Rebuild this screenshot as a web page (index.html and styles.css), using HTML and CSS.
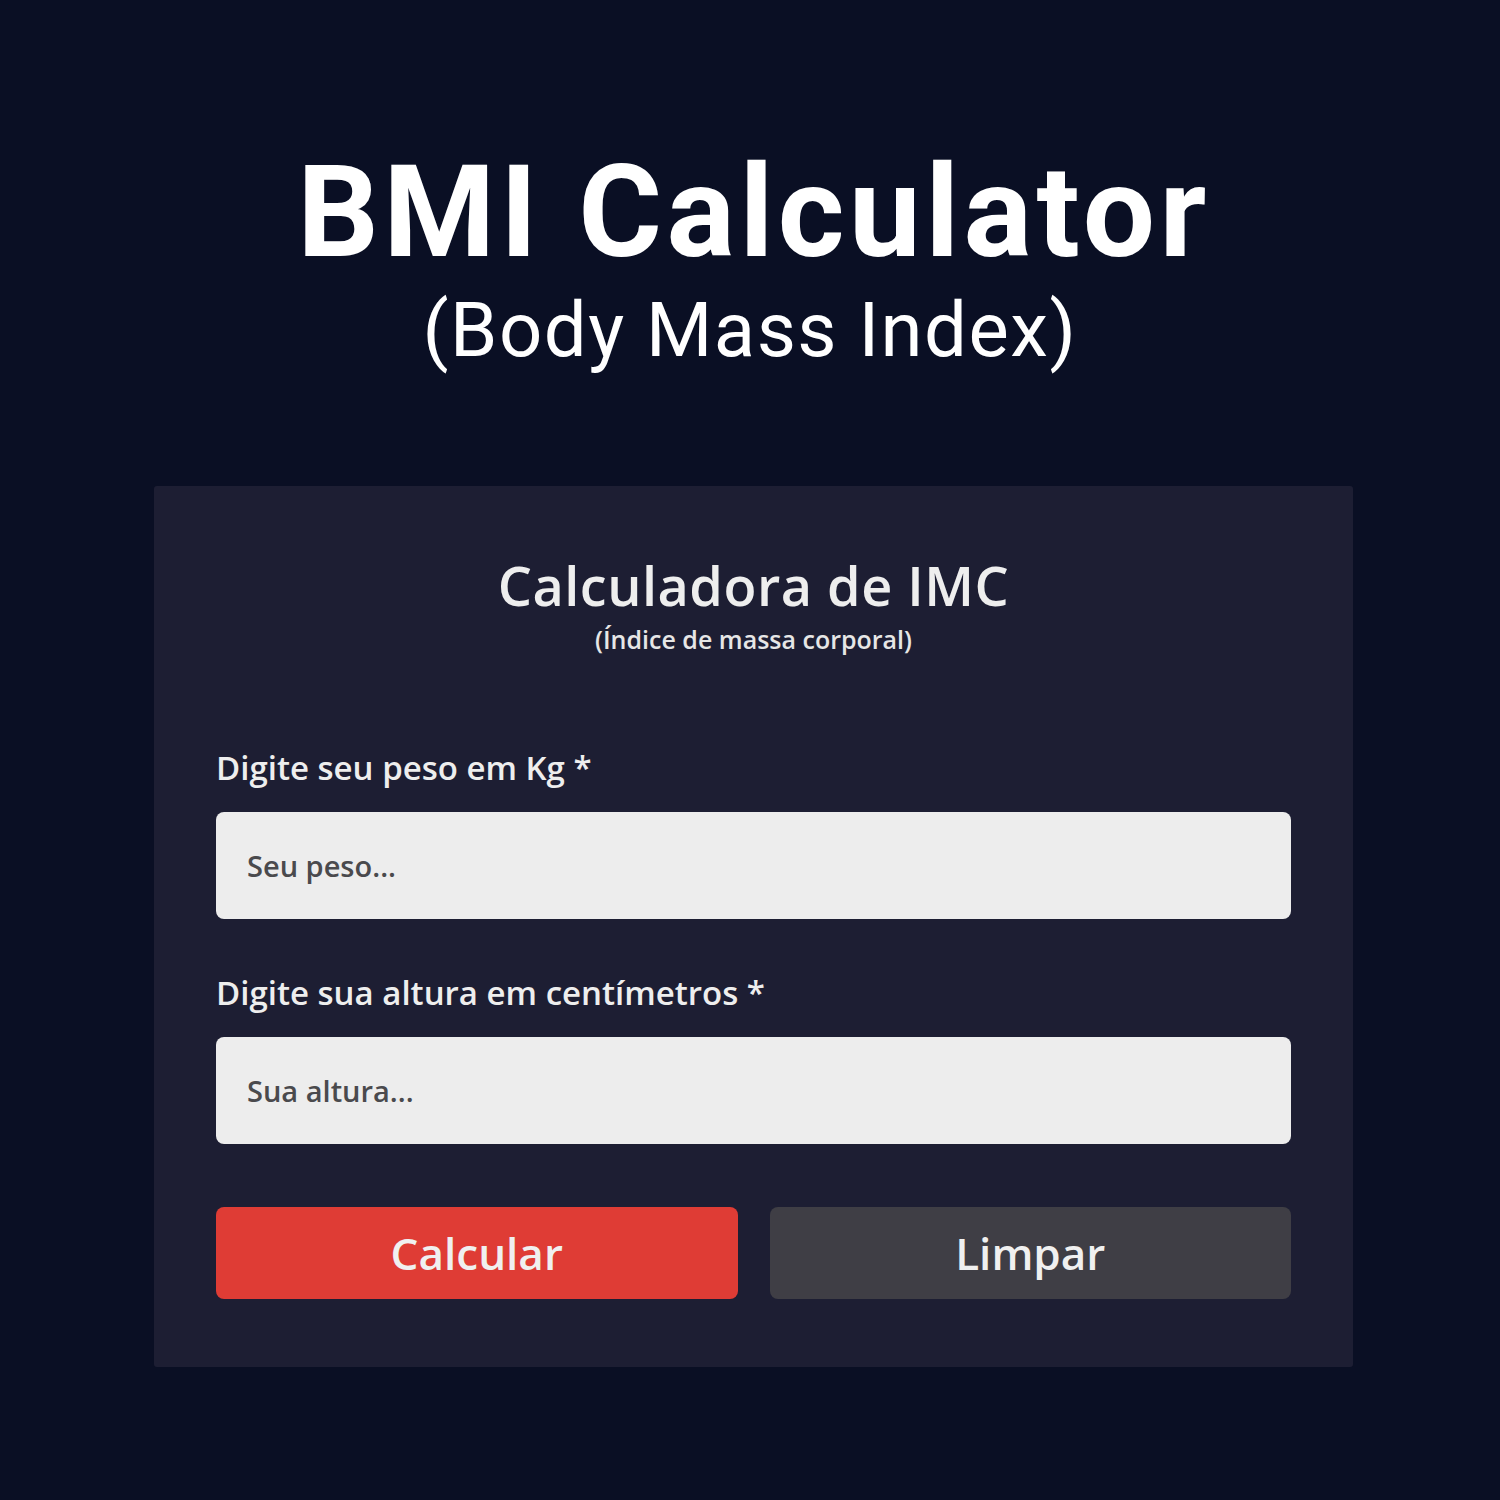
FILE: index.html
```html
<!DOCTYPE html>
<html lang="pt">
<head>
<meta charset="utf-8">
<title>BMI Calculator</title>
<link rel="stylesheet" href="styles.css">
</head>
<body>
<main class="page">
  <header class="hero">
    <h1 class="hero-title">BMI Calculator</h1>
    <p class="hero-sub">(Body Mass Index)</p>
  </header>
  <section class="card">
    <div class="card-head">
      <h2 class="card-title">Calculadora de IMC</h2>
      <p class="card-sub">(Índice de massa corporal)</p>
    </div>
    <div class="field">
      <label class="label" for="peso">Digite seu peso em Kg *</label>
      <input class="input" id="peso" type="text" placeholder="Seu peso...">
    </div>
    <div class="field field-last">
      <label class="label" for="altura">Digite sua altura em centímetros *</label>
      <input class="input" id="altura" type="text" placeholder="Sua altura...">
    </div>
    <div class="actions">
      <button class="btn btn-primary" type="button">Calcular</button>
      <button class="btn btn-secondary" type="button">Limpar</button>
    </div>
  </section>
</main>
</body>
</html>
```

FILE: styles.css
```css
* { box-sizing: border-box; }
html, body { margin: 0; padding: 0; }
body {
  background: #0a0f24;
  width: 1500px;
  height: 1500px;
  font-family: "Open Sans", "Noto Sans", sans-serif;
  color: #eeeeee;
}
.page {
  display: flex;
  flex-direction: column;
  align-items: center;
  padding-top: 142px;
}
.hero {
  display: flex;
  flex-direction: column;
  align-items: center;
  color: #ffffff;
}
.hero-title {
  margin: 0 0 0 8px;
  font-family: "Roboto", "Liberation Sans", sans-serif;
  font-weight: 700;
  font-size: 128px;
  line-height: 140px;
  letter-spacing: 4.5px;
}
.hero-sub {
  margin: 8px 0 0;
  font-family: "Roboto", "Liberation Sans", sans-serif;
  font-weight: 400;
  font-size: 76px;
  line-height: 80px;
  letter-spacing: 1.5px;
}
.card {
  margin-top: 116px;
  margin-left: 7px;
  width: 1199px;
  background: #1d1e33;
  border-radius: 3px;
  padding: 67px 62px 68px;
  display: flex;
  flex-direction: column;
}
.card-head {
  display: flex;
  flex-direction: column;
  align-items: center;
  margin-bottom: 93px;
}
.card-title {
  margin: 0;
  font-weight: 600;
  font-size: 54px;
  line-height: 64px;
  color: #eeeeee;
  letter-spacing: 0.5px;
}
.card-sub {
  margin: 6px 0 0;
  font-weight: 600;
  font-size: 25px;
  line-height: 32px;
  color: #e6e6e6;
}
.field {
  display: flex;
  flex-direction: column;
  gap: 24px;
  margin-bottom: 54px;
}
.field-last { margin-bottom: 63px; }
.label {
  font-weight: 600;
  font-size: 33px;
  line-height: 40px;
  color: #eeeeee;
}
.input {
  height: 107px;
  border: none;
  border-radius: 8px;
  background: #ededed;
  padding: 0 31px;
  font-family: "Open Sans", "Noto Sans", sans-serif;
  font-weight: 600;
  font-size: 29px;
  color: #333;
  outline: none;
}
.input::placeholder { color: #4a4a4d; opacity: 1; }
.actions {
  display: grid;
  grid-template-columns: 1fr 1fr;
  gap: 32px;
}
.btn {
  height: 92px;
  border: none;
  border-radius: 8px;
  font-family: "Open Sans", "Noto Sans", sans-serif;
  font-weight: 600;
  font-size: 44px;
  color: #f0f0f0;
}
.btn-primary { background: #df3c35; }
.btn-secondary { background: #3f3e45; }
```
